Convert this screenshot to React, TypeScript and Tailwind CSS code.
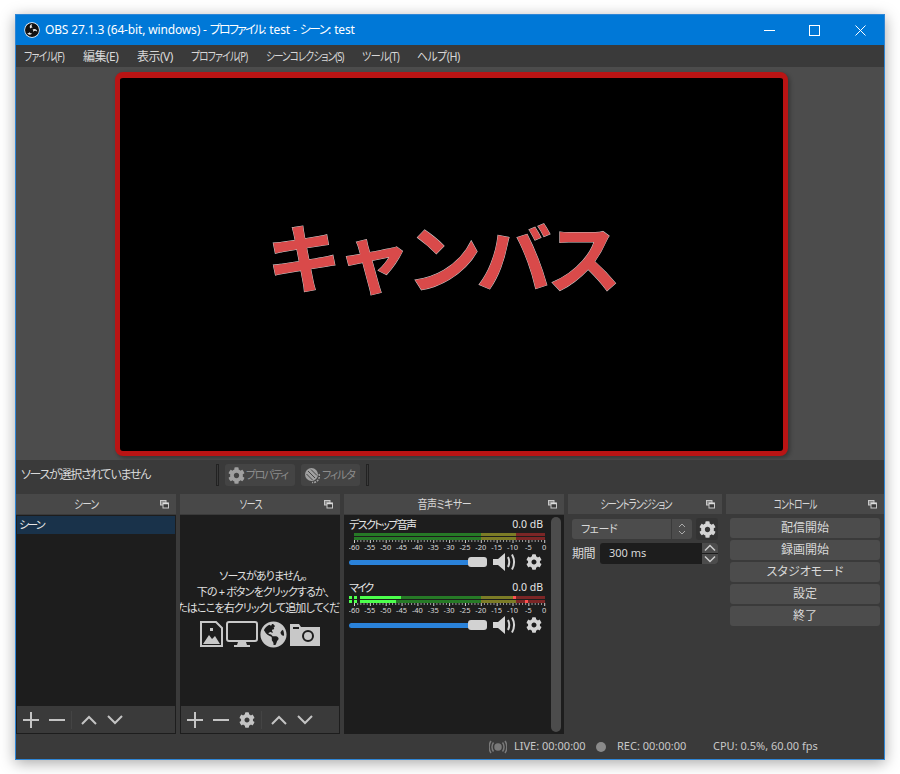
import { FaCog, FaGlobeAmericas } from "react-icons/fa";

const ui = "font-['Noto_Sans','Noto_Sans_CJK_JP',sans-serif] [font-feature-settings:'palt']";

const menus = [
  { label: "ファイル(F)", w: "w-[59px]", cls: "tracking-[-0.9px] scale-x-[0.82]" },
  { label: "編集(E)", w: "w-[54px]", cls: "tracking-[-0.5px]" },
  { label: "表示(V)", w: "w-[54px]", cls: "tracking-[-0.5px]" },
  { label: "プロファイル(P)", w: "w-[75px]", cls: "tracking-[-0.9px] scale-x-[0.8]" },
  { label: "シーンコレクション(S)", w: "w-[96px]", cls: "tracking-[-1.1px] scale-x-[0.8]" },
  { label: "ツール(T)", w: "w-[55px]", cls: "tracking-[-0.6px] scale-x-[0.84]" },
  { label: "ヘルプ(H)", w: "w-[50px]", cls: "tracking-[-0.5px] scale-x-[0.9]" },
];

function ObsLogo() {
  return (
    <svg width="16" height="16" viewBox="0 0 16 16">
      <circle cx="8" cy="8" r="7.7" fill="#fff" />
      <circle cx="8" cy="8" r="7" fill="#111" />
      <path d="M8.4 1.900a3 3 0 0 0-2.200 4.600 3 3 0 0 1 2.400-1.100 2.200 2.200 0 0 1-.2-3.500zM13.200 10a3 3 0 0 0-4.600-2.600 3 3 0 0 1 .7 2.600 2.200 2.200 0 0 1 3.900 0zM3.200 11.200a3 3 0 0 0 5 .4 3 3 0 0 1-2.700-1.400 2.200 2.200 0 0 1-2.300 1z" fill="#e8e8e8" />
    </svg>
  );
}

function DockIcon() {
  return (
    <svg width="9" height="9" viewBox="0 0 9 9" fill="none" stroke="#c8c8c8">
      <rect x="0.500" y="0.500" width="5.500" height="4.500" fill="#888" />
      <rect x="3" y="3" width="5.500" height="5" fill="#3a3a3a" />
      <path d="M3 3.500h5.500" stroke="#ddd" strokeWidth="1.500" />
    </svg>
  );
}

function DockTitle({ title, cls = "" }: { title: string; cls?: string }) {
  return (
    <div className="relative h-5 flex-none bg-[#484848] flex items-center justify-center pr-[19px] pt-[2px] text-[12px] text-[#d8d8d8]">
      <span className={`inline-block whitespace-nowrap ${cls}`}>{title}</span>
      <span className="absolute right-[7px] top-[6px] flex">
        <DockIcon />
      </span>
    </div>
  );
}

function ToolIcon({ d }: { d: string }) {
  return (
    <svg width="16" height="16" viewBox="0 0 16 16" fill="none" stroke="#c4c4c4" strokeWidth="2">
      <path d={d} />
    </svg>
  );
}

const plus = "M0 8h16M8 0v16";
const minus = "M0 8h16";
const up = "M1 12l7-7 7 7";
const down = "M1 4l7 7 7-7";

function Toolbar({ gear }: { gear?: boolean }) {
  return (
    <div className="h-[28px] flex-none bg-[#3a3a3a] border border-[#1d1d1d] border-t-0 flex items-center pl-[6px]">
      <ToolIcon d={plus} />
      <span className="w-[10px]" />
      <ToolIcon d={minus} />
      {gear && <FaCog className="ml-[10px] text-[#c4c4c4] text-[16px]" />}
      <span className="ml-[6px] mr-[9px] h-[18px] w-px bg-[#444]" />
      <ToolIcon d={up} />
      <span className="w-[10px]" />
      <ToolIcon d={down} />
    </div>
  );
}

function Ticks() {
  const labels = [-60, -55, -50, -45, -40, -35, -30, -25, -20, -15, -10, -5, 0];
  const ticks = Array.from({ length: 61 }, (_, i) => i);
  return (
    <svg width="204" height="10" viewBox="0 0 204 10" className="block">
      {ticks.map((i) => (
        <rect key={i} x={5 + i * 3.17} y="0" width="1" height={i % 5 === 0 ? 3 : 2} fill={i % 5 === 0 ? "#ccc" : "#999"} />
      ))}
      {labels.map((n, i) => (
        <text key={n} x={5 + i * 15.85} y="9.500" fontSize="7.500" textAnchor="middle" fill="#d8d8d8" fontFamily="Noto Sans">
          {n}
        </text>
      ))}
    </svg>
  );
}

function Channel({ segs }: { segs: [number, string][] }) {
  return (
    <div className="flex h-[3px]">
      {segs.map(([w, c], i) => (
        <div key={i} style={{ width: w, background: c }} />
      ))}
    </div>
  );
}

function Speaker() {
  return (
    <svg width="24" height="22" viewBox="0 0 24 22" fill="none">
      <path d="M0 8h5l7-6v18l-7-6H0z" fill="#d4d4d4" />
      <path d="M15 6c1.500 3 1.500 7 0 10M19 3.500c2.500 4.500 2.500 10.500 0 15" stroke="#d4d4d4" strokeWidth="2" />
    </svg>
  );
}

function MixerItem({ name, a, b, mic }: { name: string; a: [number, string][]; b: [number, string][]; mic?: boolean }) {
  return (
    <div className="flex flex-col">
      <div className="flex justify-between h-[16px] items-center text-[11px] text-[#e6e6e6] pr-[2px]">
        <span className={mic ? "tracking-[-2px]" : "tracking-[-1.6px]"}>{name}</span>
        <span className="text-[10.500px]">0.0 dB</span>
      </div>
      <div className={`flex flex-col gap-px ${mic ? "" : "ml-[5px]"}`}>
        <Channel segs={a} />
        <Channel segs={b} />
      </div>
      <Ticks />
      <div className="flex items-center h-[24px]">
        <div className="w-[120px] h-[5px] rounded-l-full bg-[#2a82da]" />
        <div className="w-[19px] h-[10px] -ml-px rounded-[3px] bg-[#d2d2d2]" />
        <span className="ml-[6px] flex">
          <Speaker />
        </span>
        <FaCog className="ml-[9px] text-[#d4d4d4] text-[16px]" />
      </div>
    </div>
  );
}

const G = "#267a26";
const Y = "#7c7c26";
const R = "#7c2626";
const L = "#4cff4c";
const GAP = "#1d1d1d";
const HOT = "#ff5050";

function DisabledButton({ children, cls }: { children: React.ReactNode; cls: string }) {
  return (
    <div className={`h-[22px] rounded-[3px] bg-[#444] flex items-center px-[3px] text-[11px] text-[#8c8c8c] ${cls}`}>
      {children}
    </div>
  );
}

function FilterIcon() {
  return (
    <svg width="17" height="17" viewBox="0 0 17 17" fill="none" className="flex-none">
      <circle cx="7.500" cy="7.500" r="6.500" fill="#a0a0a0" />
      <path d="M4 4l7 7M7 2.500l6 6M2.500 7l6 6" stroke="#444" strokeWidth="1" />
      <path d="M15 7c1.500 4-1.500 9-7 8.500" stroke="#a0a0a0" strokeWidth="1.500" strokeDasharray="2 1" />
    </svg>
  );
}

function ControlButton({ label }: { label: string }) {
  return (
    <div className="h-5 rounded-[3px] bg-[#4c4c4c] flex items-center justify-center text-[12px] text-[#d8d8d8]">
      {label}
    </div>
  );
}

export default function App() {
  return (
    <div className={`${ui} w-[900px] h-[774px] bg-white pt-[14px] pl-[15px] overflow-hidden`}>
      <div className="w-[870px] h-[746px] flex flex-col border border-[#2f86d6] bg-[#3a3a3a] shadow-[0_3px_14px_rgba(0,0,0,0.35)]">
        {/* title bar */}
        <div className="h-[30px] flex-none bg-[#0078d7] flex items-center text-white">
          <span className="ml-[8px] flex">
            <ObsLogo />
          </span>
          <span className="ml-[5px] text-[12px] tracking-[-0.15px] whitespace-nowrap">
            OBS 27.1.3 (64-bit, windows) - <span className="tracking-[-1.8px]">プロファイル</span>: test - <span className="tracking-[-1.5px]">シーン</span>: test
          </span>
          <div className="ml-auto flex items-center">
            <svg width="11" height="11" viewBox="0 0 11 11" stroke="#fff" fill="none" className="mr-[34px]">
              <path d="M0 5.500h11" />
            </svg>
            <svg width="11" height="11" viewBox="0 0 11 11" stroke="#fff" fill="none" className="mr-[35px]">
              <rect x="0.500" y="0.500" width="10" height="10" />
            </svg>
            <svg width="11" height="11" viewBox="0 0 11 11" stroke="#fff" fill="none" className="mr-[18px]">
              <path d="M0.500 0.500l10 10M10.500 0.500l-10 10" />
            </svg>
          </div>
        </div>

        {/* menu */}
        <div className="h-[22px] flex-none bg-[#3a3a3a] flex items-center pl-[8px] pt-[1px] text-[12px] text-[#d8d8d8]">
          {menus.map((m) => (
            <div key={m.label} className={`${m.w} flex-none`}>
              <span className={`inline-block origin-left whitespace-nowrap ${m.cls}`}>{m.label}</span>
            </div>
          ))}
        </div>

        {/* preview */}
        <div className="h-[393px] flex-none bg-[#4c4c4c] flex items-center justify-center pl-[3px]">
          <div className="w-[673px] h-[384px] bg-black border-[5px] border-t-[6px] border-[#b91414] rounded-[8px] flex items-center justify-center shadow-[2px_2px_4px_rgba(0,0,0,0.3)]">
            <span className="font-['Noto_Sans_CJK_JP',sans-serif] [font-feature-settings:normal] -ml-[20px] -mt-[20px] font-bold text-[75px] leading-none tracking-[-5px] text-[#d94a4a] [-webkit-text-stroke:1px_#c9c9c9] [paint-order:stroke_fill] whitespace-nowrap">
              キャンバス
            </span>
          </div>
        </div>

        {/* context bar */}
        <div className="h-[30px] flex-none bg-[#3a3a3a] flex items-center text-[12px] text-[#d8d8d8]">
          <span className="ml-[5px] w-[195px] tracking-[-1.3px] whitespace-nowrap">ソースが選択されていません</span>
          <span className="h-[22px] w-[3px] border border-[#222] bg-[#3a3a3a]" />
          <DisabledButton cls="ml-[6px] w-[70px]">
            <FaCog className="text-[#a0a0a0] text-[17px] flex-none" />
            <span className="ml-[1px] tracking-[-1.5px] whitespace-nowrap">プロパティ</span>
          </DisabledButton>
          <DisabledButton cls="ml-[6px] w-[59px]">
            <FilterIcon />
            <span className="ml-[1px] tracking-[-1.2px] whitespace-nowrap">フィルタ</span>
          </DisabledButton>
          <span className="ml-[6px] h-[22px] w-[3px] border border-[#222] bg-[#3a3a3a]" />
        </div>

        {/* docks */}
        <div className="h-[240px] mt-[4px] flex-none flex gap-[4px]">
          <div className="w-[160px] flex flex-col">
            <DockTitle title="シーン" cls="tracking-[-0.8px] scale-x-[0.8]" />
            <div className="mt-px flex-1 bg-[#1d1d1d] px-[1px] pt-[1px]">
              <div className="h-[18px] bg-[#19324a] flex items-center pl-[2px] text-[11px] tracking-[-1.8px] text-[#e6e6e6]">シーン</div>
            </div>
            <Toolbar />
          </div>

          <div className="w-[160px] flex flex-col">
            <DockTitle title="ソース" cls="tracking-[-0.8px] scale-x-[0.76]" />
            <div className="mt-px flex-1 bg-[#1d1d1d] flex flex-col items-center justify-center overflow-hidden">
              <div className="pl-[6px] flex flex-col items-center text-[11px] leading-[16px] text-[#e0e0e0] whitespace-nowrap tracking-[-0.85px]">
                <span>ソースがありません。</span>
                <span>下の + ボタンをクリックするか、</span>
                <span>またはここを右クリックして追加してください</span>
              </div>
              <div className="flex items-center mt-[5px] mb-[6px] text-[#c8c8c8]">
                <svg width="23" height="26" viewBox="0 0 23 26" fill="none">
                  <path d="M1 1h15l6 6v18H1z" stroke="#c8c8c8" strokeWidth="2" />
                  <path d="M3 23l6-9 3 4 3-3 5 8z" fill="#c8c8c8" />
                  <rect x="10" y="7" width="3" height="3" fill="#c8c8c8" />
                </svg>
                <svg width="32" height="27" viewBox="0 0 32 27" fill="none" className="ml-[3px]">
                  <rect x="1" y="1" width="30" height="19" rx="2" stroke="#c8c8c8" strokeWidth="2" />
                  <path d="M12 21h8l1 3h3v2H8v-2h3z" fill="#c8c8c8" />
                </svg>
                <FaGlobeAmericas className="ml-[2px] text-[27px]" />
                <svg width="30" height="24" viewBox="0 0 30 24" fill="none" className="ml-[3px]">
                  <path d="M0 2h9l2 3h19v19H0z" fill="#c8c8c8" />
                  <rect x="3" y="5" width="6" height="2" fill="#1d1d1d" />
                  <circle cx="18" cy="14" r="5" fill="#c8c8c8" stroke="#1d1d1d" strokeWidth="2" />
                </svg>
              </div>
            </div>
            <Toolbar gear />
          </div>

          <div className="w-[220px] flex flex-col">
            <DockTitle title="音声ミキサー" cls="tracking-[-0.6px] scale-x-[0.83]" />
            <div className="mt-px flex-1 bg-[#1d1d1d] flex pl-[5px] pr-[3px] py-[2px]">
              <div className="w-[196px] flex flex-col gap-[6px]">
                <MixerItem
                  name="デスクトップ音声"
                  a={[[127, G], [35, Y], [29, R]]}
                  b={[[127, G], [35, Y], [29, R]]}
                />
                <MixerItem
                  mic
                  name="マイク"
                  a={[[3, L], [2, GAP], [3, L], [3, GAP], [41, L], [80, G], [32, Y], [3, HOT], [29, R]]}
                  b={[[3, L], [2, GAP], [3, L], [3, GAP], [36, L], [85, G], [35, Y], [9, R], [3, HOT], [17, R]]}
                />
              </div>
              <div className="ml-auto w-[10px] h-full rounded-full bg-[#4c4c4c]" />
            </div>
          </div>

          <div className="w-[154px] flex flex-col">
            <DockTitle title="シーントランジション" cls="tracking-[-1.2px] scale-x-[0.76]" />
            <div className="flex-1 bg-[#3a3a3a] px-[4px] pt-[4px] flex flex-col gap-[3px]">
              <div className="flex items-center">
                <div className="w-[120px] h-5 rounded-[3px] bg-[#4c4c4c] flex items-center text-[11px] text-[#d8d8d8]">
                  <span className="ml-[9px] tracking-[-0.3px]">フェード</span>
                  <span className="ml-auto h-5 w-px bg-[#3a3a3a]" />
                  <svg width="20" height="20" viewBox="0 0 20 20" fill="none" stroke="#aaa">
                    <path d="M7 8l3-3 3 3M7 12l3 3 3-3" />
                  </svg>
                </div>
                <div className="ml-[4px] w-[22px] h-[22px] rounded-[3px] bg-[#333] flex items-center justify-center">
                  <FaCog className="text-[#d4d4d4] text-[17px]" />
                </div>
              </div>
              <div className="flex items-center text-[12px] text-[#d8d8d8]">
                <span className="w-[28px] tracking-[-0.5px] whitespace-nowrap">期間</span>
                <div className="w-[118px] h-[21px] rounded-[3px] bg-[#1d1d1d] flex items-center">
                  <span className="ml-[9px] text-[11px]">300 ms</span>
                  <div className="ml-auto w-[16px] flex flex-col gap-px">
                    <div className="h-[10px] bg-[#4c4c4c] rounded-tr-[3px] flex items-center justify-center">
                      <svg width="12" height="8" viewBox="0 0 12 8" fill="none" stroke="#ccc" strokeWidth="1.500"><path d="M1 6.500l5-5 5 5" /></svg>
                    </div>
                    <div className="h-[10px] bg-[#4c4c4c] rounded-br-[3px] flex items-center justify-center">
                      <svg width="12" height="8" viewBox="0 0 12 8" fill="none" stroke="#ccc" strokeWidth="1.500"><path d="M1 1.500l5 5 5-5" /></svg>
                    </div>
                  </div>
                </div>
              </div>
            </div>
          </div>

          <div className="w-[158px] flex flex-col">
            <DockTitle title="コントロール" cls="tracking-[-0.9px] scale-x-[0.71]" />
            <div className="flex-1 bg-[#3a3a3a] px-[4px] pt-[4px] flex flex-col gap-[2px]">
              <ControlButton label="配信開始" />
              <ControlButton label="録画開始" />
              <ControlButton label="スタジオモード" />
              <ControlButton label="設定" />
              <ControlButton label="終了" />
            </div>
          </div>
        </div>

        {/* status bar */}
        <div className="flex-1 flex items-center text-[11px] text-[#c8c8c8] whitespace-nowrap">
          <svg width="18" height="14" viewBox="0 0 18 14" fill="none" stroke="#7a7a7a" strokeWidth="1.500" className="ml-[473px]">
            <circle cx="9" cy="7" r="3" fill="#7a7a7a" />
            <path d="M4.500 2.500c-2 2.500-2 6.500 0 9M13.500 2.500c2 2.500 2 6.500 0 9M2 1c-2.500 3.500-2.500 8.500 0 12M16 1c2.500 3.500 2.500 8.500 0 12" />
          </svg>
          <span className="ml-[7px] w-[82px]">LIVE: 00:00:00</span>
          <span className="w-[10px] h-[10px] rounded-full bg-[#8a8a8a]" />
          <span className="ml-[11px] w-[96px]">REC: 00:00:00</span>
          <span>CPU: 0.5%, 60.00 fps</span>
        </div>
      </div>
    </div>
  );
}
